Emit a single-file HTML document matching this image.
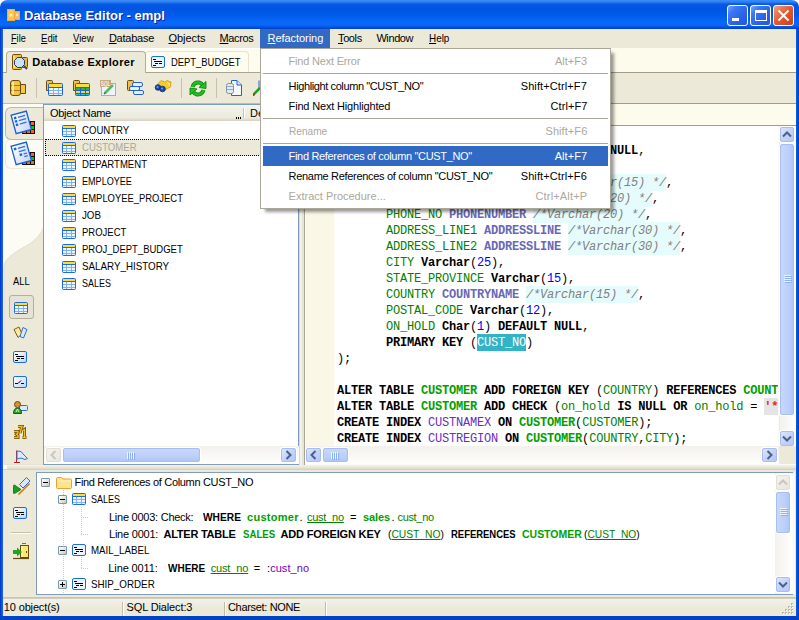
<!DOCTYPE html>
<html><head><meta charset="utf-8">
<style>
*{box-sizing:border-box}
html,body{margin:0;padding:0;width:799px;height:620px;overflow:hidden;background:#ECE9D8}
body{position:relative;font-family:"Liberation Sans",sans-serif;font-size:11px;color:#000}
.a{position:absolute}
.t{position:absolute;white-space:pre;line-height:13px}
#title{left:0;top:0;width:799px;height:29px;border-radius:7px 7px 0 0;
 background:linear-gradient(#3C8EF8 0px,#2E7EF2 2px,#0A5AE2 4px,#0055E2 8px,#005AEA 15px,#0866F8 21px,#0A68FA 25px,#0050DA 27.5px,#0040C4 29px)}
#lb{left:0;top:29px;width:3px;height:591px;background:linear-gradient(90deg,#0036BC,#0A52E0 50%,#1E66F0)}
#rb{left:796px;top:29px;width:3px;height:591px;background:linear-gradient(90deg,#0A5BE0,#0040C0)}
#bb{left:0;top:616px;width:799px;height:4px;background:#0043C4}
.cb{position:absolute;top:5px;width:21px;height:21px;border:1px solid #fff;border-radius:3px}
.mi{position:absolute;top:32px;line-height:13px;letter-spacing:-0.2px}
.u{text-decoration:underline}
/* list */
.row{position:absolute;left:44px;width:255px;height:17px}
.row .ic{position:absolute;left:18px;top:3px}
.row .tx{position:absolute;left:37px;top:2px;line-height:13px;letter-spacing:-0.9px}
/* code */
.code{position:absolute;left:337px;font-family:"Liberation Mono",monospace;font-size:12px;letter-spacing:-0.2px;line-height:16px;white-space:pre;margin-top:1px}
.k{font-weight:bold;color:#000}
.g{color:#008000}
.gb{color:#00A000;font-weight:bold}
.d{color:#6868B8;font-weight:bold}
.c{color:#808080;font-style:italic;background:#E6FCFC;padding:2px 0 1px}
.n{color:#0000FF}
.p{color:#6A2CC0}
/* scrollbar parts */
.sbtn{position:absolute;border:1px solid #B4C8F6;border-radius:2px;background:linear-gradient(90deg,#C8D8FB,#B9CEFA)}
/* menu */
#dd{left:260px;top:48px;width:351px;height:161px;background:#fff;border:1px solid #ACA899;box-shadow:4px 4px 3px -1px rgba(0,0,0,0.4)}
.dm{position:absolute;left:27px;line-height:13px;letter-spacing:-0.3px}
.ds{position:absolute;right:21px;line-height:13px;letter-spacing:-0.3px}
.dis{color:#ACA899}
.sep{position:absolute;left:1px;width:346px;height:1px;background:#ACA899}
</style></head>
<body>
<!-- frame -->
<div class="a" style="left:0;top:0;width:799px;height:10px;background:#fff"></div>
<div id="title" class="a"></div>
<div id="lb" class="a"></div><div id="rb" class="a"></div><div id="bb" class="a"></div>
<!-- title icon -->
<div class="t" style="left:24px;top:8px;font-size:13px;line-height:16px;font-weight:bold;color:#fff;text-shadow:1px 1px 0 #0A1E9E">Database Editor - empl</div>
<div class="cb" style="left:727px;background:linear-gradient(135deg,#7AA8FC,#3C78F4 25%,#2C64EC 60%,#2456E0)"><div class="a" style="left:4px;top:12px;width:7px;height:3px;background:#fff"></div></div>
<div class="cb" style="left:750px;background:linear-gradient(135deg,#7AA8FC,#3C78F4 25%,#2C64EC 60%,#2456E0)"><div class="a" style="left:4px;top:4px;width:12px;height:11px;border:1px solid #fff;border-top-width:3px"></div></div>
<div class="cb" style="left:773px;background:linear-gradient(135deg,#F0A080,#E0592F 50%,#C8421A)"><svg class="a" style="left:0;top:0" width="19" height="19"><path d="M4.5 4.5L14.5 14.5M14.5 4.5L4.5 14.5" stroke="#fff" stroke-width="2"/></svg></div>

<!-- menu bar -->
<div class="a" style="left:3px;top:29px;width:793px;height:19px;background:#ECE9D8"></div>
<div class="a" style="left:260px;top:29px;width:70px;height:19px;background:#316AC5"></div>

<span class="t" style="left:11px;top:32px;transform:scaleX(0.8333);transform-origin:0px 0;"><span class="u">F</span>ile</span>
<span class="t" style="left:41px;top:32px;transform:scaleX(0.8684);transform-origin:0px 0;"><span class="u">E</span>dit</span>
<span class="t" style="left:73.1px;top:32px;transform:scaleX(0.8708);transform-origin:0px 0;"><span class="u">V</span>iew</span>
<span class="t" style="left:108.9px;top:32px;letter-spacing:-0.229px;"><span class="u">D</span>atabase</span>
<span class="t" style="left:168.5px;top:32px;letter-spacing:-0.033px;"><span class="u">O</span>bjects</span>
<span class="t" style="left:219.6px;top:32px;letter-spacing:-0.4px;"><span class="u">M</span>acros</span>
<span class="t" style="left:267.6px;top:32px;letter-spacing:-0.06px;color:#fff;"><span class="u">R</span>efactoring</span>
<span class="t" style="left:338px;top:32px;letter-spacing:-0.375px;"><span class="u">T</span>ools</span>
<span class="t" style="left:376.4px;top:32px;letter-spacing:-0.4px;">Window</span>
<span class="t" style="left:428.5px;top:32px;transform:scaleX(0.9);transform-origin:0px 0;"><span class="u">H</span>elp</span>
<!-- LEFT PANEL -->
<!-- tab row -->
<div class="a" style="left:3px;top:48px;width:296px;height:25px;background:#FDFCEF"></div>
<div class="a" style="left:3px;top:48px;width:296px;height:1px;background:#FFFFFF"></div>
<div class="a" style="left:3px;top:72px;width:296px;height:1px;background:#A8A48F"></div>
<div class="a" style="left:145px;top:51px;width:104px;height:21px;background:#FDFCEF;border:1px solid #E6E3D3;border-bottom:none;border-radius:4px 4px 0 0"></div>
<div class="a" style="left:6px;top:51px;width:140px;height:22px;background:#ECE9D8;border:1px solid #B0AC98;border-bottom:none;border-radius:4px 4px 0 0"></div>
<span class="t" style="left:32.2px;top:56px;letter-spacing:0.362px;font-weight:bold;">Database Explorer</span>
<span class="t" style="left:170.7px;top:56px;transform:scaleX(0.8556);transform-origin:0px 0;">DEPT_BUDGET</span>
<!-- toolbar -->
<div class="a" style="left:3px;top:73px;width:296px;height:30px;background:#ECE9D8"></div>
<div class="a" style="left:3px;top:103px;width:296px;height:1px;background:#A6BEDF"></div>
<!-- vertical tab strip -->
<div class="a" style="left:3px;top:104px;width:41px;height:361px;background:#FDFCF4"></div>
<svg class="a" style="left:3px;top:104px" width="41" height="361"><path d="M41 123C34 138 24 141 16 146C8 151 1 156 1 164L1 361L41 361Z" fill="#ECE9D8" stroke="#E2DFD0" stroke-width="1"/></svg>
<div class="a" style="left:5px;top:139px;width:39px;height:30px;background:#FDFCF4;border:1px solid #ECEADC;border-right:none;border-radius:6px 0 0 6px"></div>
<div class="a" style="left:5px;top:107px;width:39px;height:33px;background:#ECE9D8;border:1px solid #BEBAA6;border-right:none;border-radius:6px 0 0 6px"></div>
<span class="t" style="left:12.9px;top:275px;transform:scaleX(0.85);transform-origin:0px 0;">ALL</span>
<div class="a" style="left:9px;top:295px;width:25px;height:24px;border:1px solid #B4B09C;border-radius:3px;background:#E6E3D5"></div>
<!-- list view -->
<div class="a" style="left:43px;top:104px;width:256px;height:361px;border:1px solid #7F9DB9;background:#fff"></div>
<div class="a" style="left:44px;top:105px;width:254px;height:16px;background:linear-gradient(#F4F3EE,#EBEADB 80%,#D6D2C2)"></div>
<span class="t" style="left:50px;top:107px;letter-spacing:-0.3px;">Object Name</span>
<span class="t" style="left:250px;top:107px;letter-spacing:0px;">De</span>
<div class="a" style="left:236px;top:117px;width:1px;height:2px;background:#000;box-shadow:2px 0 0 #000,4px 0 0 #000"></div>
<div class="a" style="left:243px;top:108px;width:1px;height:10px;background:#C7C5B2;box-shadow:1px 0 0 #fff"></div>
<div class="a" style="left:45px;top:139px;width:254px;height:17px;background:#ECE9D8;outline:1px dotted #000;outline-offset:-1px"></div>
<div class="row" style="top:122px"><svg class="ic" width="14" height="12" viewBox="0 0 14 12"><rect x="0.5" y="0.5" width="13" height="11" rx="1" fill="#7EB2F2" stroke="#1E6CD8"/><rect x="1" y="1" width="12" height="2" fill="#F8DC40"/><path d="M1 3.5H13" stroke="#1E6CD8"/><rect x="1" y="4" width="3" height="2" fill="#EEF5FE"/><rect x="5" y="4" width="4" height="2" fill="#EEF5FE"/><rect x="10" y="4" width="3" height="2" fill="#EEF5FE"/><rect x="1" y="7" width="3" height="2" fill="#EEF5FE"/><rect x="5" y="7" width="4" height="2" fill="#EEF5FE"/><rect x="10" y="7" width="3" height="2" fill="#EEF5FE"/><rect x="1" y="10" width="3" height="1" fill="#EEF5FE"/><rect x="5" y="10" width="4" height="1" fill="#EEF5FE"/><rect x="10" y="10" width="3" height="1" fill="#EEF5FE"/></svg></div>
<div class="row" style="top:139px"><svg class="ic" width="14" height="12" viewBox="0 0 14 12"><rect x="0.5" y="0.5" width="13" height="11" rx="1" fill="#7EB2F2" stroke="#1E6CD8"/><rect x="1" y="1" width="12" height="2" fill="#F8DC40"/><path d="M1 3.5H13" stroke="#1E6CD8"/><rect x="1" y="4" width="3" height="2" fill="#EEF5FE"/><rect x="5" y="4" width="4" height="2" fill="#EEF5FE"/><rect x="10" y="4" width="3" height="2" fill="#EEF5FE"/><rect x="1" y="7" width="3" height="2" fill="#EEF5FE"/><rect x="5" y="7" width="4" height="2" fill="#EEF5FE"/><rect x="10" y="7" width="3" height="2" fill="#EEF5FE"/><rect x="1" y="10" width="3" height="1" fill="#EEF5FE"/><rect x="5" y="10" width="4" height="1" fill="#EEF5FE"/><rect x="10" y="10" width="3" height="1" fill="#EEF5FE"/></svg></div>
<div class="row" style="top:156px"><svg class="ic" width="14" height="12" viewBox="0 0 14 12"><rect x="0.5" y="0.5" width="13" height="11" rx="1" fill="#7EB2F2" stroke="#1E6CD8"/><rect x="1" y="1" width="12" height="2" fill="#F8DC40"/><path d="M1 3.5H13" stroke="#1E6CD8"/><rect x="1" y="4" width="3" height="2" fill="#EEF5FE"/><rect x="5" y="4" width="4" height="2" fill="#EEF5FE"/><rect x="10" y="4" width="3" height="2" fill="#EEF5FE"/><rect x="1" y="7" width="3" height="2" fill="#EEF5FE"/><rect x="5" y="7" width="4" height="2" fill="#EEF5FE"/><rect x="10" y="7" width="3" height="2" fill="#EEF5FE"/><rect x="1" y="10" width="3" height="1" fill="#EEF5FE"/><rect x="5" y="10" width="4" height="1" fill="#EEF5FE"/><rect x="10" y="10" width="3" height="1" fill="#EEF5FE"/></svg></div>
<div class="row" style="top:173px"><svg class="ic" width="14" height="12" viewBox="0 0 14 12"><rect x="0.5" y="0.5" width="13" height="11" rx="1" fill="#7EB2F2" stroke="#1E6CD8"/><rect x="1" y="1" width="12" height="2" fill="#F8DC40"/><path d="M1 3.5H13" stroke="#1E6CD8"/><rect x="1" y="4" width="3" height="2" fill="#EEF5FE"/><rect x="5" y="4" width="4" height="2" fill="#EEF5FE"/><rect x="10" y="4" width="3" height="2" fill="#EEF5FE"/><rect x="1" y="7" width="3" height="2" fill="#EEF5FE"/><rect x="5" y="7" width="4" height="2" fill="#EEF5FE"/><rect x="10" y="7" width="3" height="2" fill="#EEF5FE"/><rect x="1" y="10" width="3" height="1" fill="#EEF5FE"/><rect x="5" y="10" width="4" height="1" fill="#EEF5FE"/><rect x="10" y="10" width="3" height="1" fill="#EEF5FE"/></svg></div>
<div class="row" style="top:190px"><svg class="ic" width="14" height="12" viewBox="0 0 14 12"><rect x="0.5" y="0.5" width="13" height="11" rx="1" fill="#7EB2F2" stroke="#1E6CD8"/><rect x="1" y="1" width="12" height="2" fill="#F8DC40"/><path d="M1 3.5H13" stroke="#1E6CD8"/><rect x="1" y="4" width="3" height="2" fill="#EEF5FE"/><rect x="5" y="4" width="4" height="2" fill="#EEF5FE"/><rect x="10" y="4" width="3" height="2" fill="#EEF5FE"/><rect x="1" y="7" width="3" height="2" fill="#EEF5FE"/><rect x="5" y="7" width="4" height="2" fill="#EEF5FE"/><rect x="10" y="7" width="3" height="2" fill="#EEF5FE"/><rect x="1" y="10" width="3" height="1" fill="#EEF5FE"/><rect x="5" y="10" width="4" height="1" fill="#EEF5FE"/><rect x="10" y="10" width="3" height="1" fill="#EEF5FE"/></svg></div>
<div class="row" style="top:207px"><svg class="ic" width="14" height="12" viewBox="0 0 14 12"><rect x="0.5" y="0.5" width="13" height="11" rx="1" fill="#7EB2F2" stroke="#1E6CD8"/><rect x="1" y="1" width="12" height="2" fill="#F8DC40"/><path d="M1 3.5H13" stroke="#1E6CD8"/><rect x="1" y="4" width="3" height="2" fill="#EEF5FE"/><rect x="5" y="4" width="4" height="2" fill="#EEF5FE"/><rect x="10" y="4" width="3" height="2" fill="#EEF5FE"/><rect x="1" y="7" width="3" height="2" fill="#EEF5FE"/><rect x="5" y="7" width="4" height="2" fill="#EEF5FE"/><rect x="10" y="7" width="3" height="2" fill="#EEF5FE"/><rect x="1" y="10" width="3" height="1" fill="#EEF5FE"/><rect x="5" y="10" width="4" height="1" fill="#EEF5FE"/><rect x="10" y="10" width="3" height="1" fill="#EEF5FE"/></svg></div>
<div class="row" style="top:224px"><svg class="ic" width="14" height="12" viewBox="0 0 14 12"><rect x="0.5" y="0.5" width="13" height="11" rx="1" fill="#7EB2F2" stroke="#1E6CD8"/><rect x="1" y="1" width="12" height="2" fill="#F8DC40"/><path d="M1 3.5H13" stroke="#1E6CD8"/><rect x="1" y="4" width="3" height="2" fill="#EEF5FE"/><rect x="5" y="4" width="4" height="2" fill="#EEF5FE"/><rect x="10" y="4" width="3" height="2" fill="#EEF5FE"/><rect x="1" y="7" width="3" height="2" fill="#EEF5FE"/><rect x="5" y="7" width="4" height="2" fill="#EEF5FE"/><rect x="10" y="7" width="3" height="2" fill="#EEF5FE"/><rect x="1" y="10" width="3" height="1" fill="#EEF5FE"/><rect x="5" y="10" width="4" height="1" fill="#EEF5FE"/><rect x="10" y="10" width="3" height="1" fill="#EEF5FE"/></svg></div>
<div class="row" style="top:241px"><svg class="ic" width="14" height="12" viewBox="0 0 14 12"><rect x="0.5" y="0.5" width="13" height="11" rx="1" fill="#7EB2F2" stroke="#1E6CD8"/><rect x="1" y="1" width="12" height="2" fill="#F8DC40"/><path d="M1 3.5H13" stroke="#1E6CD8"/><rect x="1" y="4" width="3" height="2" fill="#EEF5FE"/><rect x="5" y="4" width="4" height="2" fill="#EEF5FE"/><rect x="10" y="4" width="3" height="2" fill="#EEF5FE"/><rect x="1" y="7" width="3" height="2" fill="#EEF5FE"/><rect x="5" y="7" width="4" height="2" fill="#EEF5FE"/><rect x="10" y="7" width="3" height="2" fill="#EEF5FE"/><rect x="1" y="10" width="3" height="1" fill="#EEF5FE"/><rect x="5" y="10" width="4" height="1" fill="#EEF5FE"/><rect x="10" y="10" width="3" height="1" fill="#EEF5FE"/></svg></div>
<div class="row" style="top:258px"><svg class="ic" width="14" height="12" viewBox="0 0 14 12"><rect x="0.5" y="0.5" width="13" height="11" rx="1" fill="#7EB2F2" stroke="#1E6CD8"/><rect x="1" y="1" width="12" height="2" fill="#F8DC40"/><path d="M1 3.5H13" stroke="#1E6CD8"/><rect x="1" y="4" width="3" height="2" fill="#EEF5FE"/><rect x="5" y="4" width="4" height="2" fill="#EEF5FE"/><rect x="10" y="4" width="3" height="2" fill="#EEF5FE"/><rect x="1" y="7" width="3" height="2" fill="#EEF5FE"/><rect x="5" y="7" width="4" height="2" fill="#EEF5FE"/><rect x="10" y="7" width="3" height="2" fill="#EEF5FE"/><rect x="1" y="10" width="3" height="1" fill="#EEF5FE"/><rect x="5" y="10" width="4" height="1" fill="#EEF5FE"/><rect x="10" y="10" width="3" height="1" fill="#EEF5FE"/></svg></div>
<div class="row" style="top:275px"><svg class="ic" width="14" height="12" viewBox="0 0 14 12"><rect x="0.5" y="0.5" width="13" height="11" rx="1" fill="#7EB2F2" stroke="#1E6CD8"/><rect x="1" y="1" width="12" height="2" fill="#F8DC40"/><path d="M1 3.5H13" stroke="#1E6CD8"/><rect x="1" y="4" width="3" height="2" fill="#EEF5FE"/><rect x="5" y="4" width="4" height="2" fill="#EEF5FE"/><rect x="10" y="4" width="3" height="2" fill="#EEF5FE"/><rect x="1" y="7" width="3" height="2" fill="#EEF5FE"/><rect x="5" y="7" width="4" height="2" fill="#EEF5FE"/><rect x="10" y="7" width="3" height="2" fill="#EEF5FE"/><rect x="1" y="10" width="3" height="1" fill="#EEF5FE"/><rect x="5" y="10" width="4" height="1" fill="#EEF5FE"/><rect x="10" y="10" width="3" height="1" fill="#EEF5FE"/></svg></div><span class="t" style="left:81.7px;top:124px;transform:scaleX(0.8722);transform-origin:0px 0;">COUNTRY</span>
<span class="t" style="left:81.7px;top:141px;transform:scaleX(0.8694);transform-origin:0px 0;color:#ACA899;">CUSTOMER</span>
<span class="t" style="left:81.7px;top:158px;transform:scaleX(0.8693);transform-origin:0px 0;">DEPARTMENT</span>
<span class="t" style="left:81.7px;top:175px;transform:scaleX(0.8246);transform-origin:0px 0;">EMPLOYEE</span>
<span class="t" style="left:81.7px;top:192px;transform:scaleX(0.8551);transform-origin:0px 0;">EMPLOYEE_PROJECT</span>
<span class="t" style="left:81.7px;top:209px;transform:scaleX(0.8857);transform-origin:0px 0;">JOB</span>
<span class="t" style="left:81.7px;top:226px;transform:scaleX(0.8627);transform-origin:0px 0;">PROJECT</span>
<span class="t" style="left:81.7px;top:243px;transform:scaleX(0.8624);transform-origin:0px 0;">PROJ_DEPT_BUDGET</span>
<span class="t" style="left:81.7px;top:260px;transform:scaleX(0.8908);transform-origin:0px 0;">SALARY_HISTORY</span>
<span class="t" style="left:81.7px;top:277px;transform:scaleX(0.8139);transform-origin:0px 0;">SALES</span>
<!-- left h-scroll -->
<div class="a" style="left:44px;top:446px;width:255px;height:18px;background:#FBFAF6"></div>

<!-- splitter -->
<div class="a" style="left:299px;top:48px;width:6px;height:417px;background:#ECE9D8"></div>
<div class="a" style="left:299px;top:104px;width:6px;height:361px;background:linear-gradient(90deg,#DCDAC8 0,#DCDAC8 1px,#F2F1EC 1px,#F2F1EC 3px,#E6E4D8 3px,#E6E4D8 5px,#A9A592 5px)"></div>

<!-- RIGHT PANEL -->
<div class="a" style="left:305px;top:48px;width:491px;height:25px;background:#FDFBEC"></div>
<div class="a" style="left:305px;top:72px;width:491px;height:1px;background:#A09C88"></div>
<div class="a" style="left:305px;top:73px;width:491px;height:30px;background:#ECE9D8"></div>
<div class="a" style="left:305px;top:103px;width:491px;height:1px;background:#A09C88"></div>
<div class="a" style="left:305px;top:104px;width:491px;height:21px;background:#FDFBEC"></div>
<div class="a" style="left:305px;top:125px;width:491px;height:1px;background:#A09C88"></div>
<!-- editor -->
<div class="a" style="left:305px;top:126px;width:491px;height:320px;background:#fff"></div>
<div class="a" style="left:305px;top:126px;width:30px;height:320px;background:#FAF7E6;border-left:1px solid #FFFDEA;border-right:1px solid #FDFDF6"></div>
<div class="a" style="left:305px;top:126px;width:473px;height:320px;overflow:hidden"><div class="code" style="left:32px;top:0px"><span class="k">CREATE TABLE</span> <span class="gb">CUSTOMER</span> (</div>
<div class="code" style="left:32px;top:16px">       <span class="g">CUST_NO</span> <span class="d">CUSTNO</span> <span class="c">/*Integer */</span> <span class="k">NOT NULL</span>,</div>
<div class="code" style="left:32px;top:32px">       <span class="g">CUSTOMER</span> <span class="k">Varchar</span>(<span class="n">25</span>) <span class="k">NOT NULL</span>,</div>
<div class="code" style="left:32px;top:48px">       <span class="g">CONTACT_FIRST</span> <span class="d">FIRSTNAME</span> <span class="c">/*Varchar(15) */</span>,</div>
<div class="code" style="left:32px;top:64px">       <span class="g">CONTACT_LAST</span> <span class="d">LASTNAME</span> <span class="c">/*Varchar(20) */</span>,</div>
<div class="code" style="left:32px;top:80px">       <span class="g">PHONE_NO</span> <span class="d">PHONENUMBER</span> <span class="c">/*Varchar(20) */</span>,</div>
<div class="code" style="left:32px;top:96px">       <span class="g">ADDRESS_LINE1</span> <span class="d">ADDRESSLINE</span> <span class="c">/*Varchar(30) */</span>,</div>
<div class="code" style="left:32px;top:112px">       <span class="g">ADDRESS_LINE2</span> <span class="d">ADDRESSLINE</span> <span class="c">/*Varchar(30) */</span>,</div>
<div class="code" style="left:32px;top:128px">       <span class="g">CITY</span> <span class="k">Varchar</span>(<span class="n">25</span>),</div>
<div class="code" style="left:32px;top:144px">       <span class="g">STATE_PROVINCE</span> <span class="k">Varchar</span>(<span class="n">15</span>),</div>
<div class="code" style="left:32px;top:160px">       <span class="g">COUNTRY</span> <span class="d">COUNTRYNAME</span> <span class="c">/*Varchar(15) */</span>,</div>
<div class="code" style="left:32px;top:176px">       <span class="g">POSTAL_CODE</span> <span class="k">Varchar</span>(<span class="n">12</span>),</div>
<div class="code" style="left:32px;top:192px">       <span class="g">ON_HOLD</span> <span class="k">Char</span>(<span class="n">1</span>) <span class="k">DEFAULT NULL</span>,</div>
<div class="code" style="left:32px;top:208px">       <span class="k">PRIMARY KEY</span> (<span style="background:#33B4C6;color:#fff;padding:2px 0 1px">CUST_NO</span>)</div>
<div class="code" style="left:32px;top:224px">);</div>
<div class="code" style="left:32px;top:240px"></div>
<div class="code" style="left:32px;top:256px"><span class="k">ALTER TABLE</span> <span class="gb">CUSTOMER</span> <span class="k">ADD FOREIGN KEY</span> (<span class="g">COUNTRY</span>) <span class="k">REFERENCES</span> <span class="gb">COUNTRY</span>(<span class="g">COUNTRY</span>)</div>
<div class="code" style="left:32px;top:272px"><span class="k">ALTER TABLE</span> <span class="gb">CUSTOMER</span> <span class="k">ADD CHECK</span> (<span class="g">on_hold</span> <span class="k">IS NULL OR</span> <span class="g">on_hold</span> = <span style="color:#E03000;background:#E4E4E4;font-weight:bold;padding:2px 0 1px">'*'</span>)</div>
<div class="code" style="left:32px;top:288px"><span class="k">CREATE INDEX</span> <span class="p">CUSTNAMEX</span> <span class="k">ON</span> <span class="gb">CUSTOMER</span>(<span class="g">CUSTOMER</span>);</div>
<div class="code" style="left:32px;top:304px"><span class="k">CREATE INDEX</span> <span class="p">CUSTREGION</span> <span class="k">ON</span> <span class="gb">CUSTOMER</span>(<span class="g">COUNTRY</span>,<span class="g">CITY</span>);</div></div>
<!-- v scroll -->
<div class="a" style="left:778px;top:126px;width:18px;height:320px;background:#FBFAF6"></div>
<!-- h scroll -->
<div class="a" style="left:305px;top:446px;width:491px;height:19px;background:#FBFAF6"></div>

<!-- bottom splitter -->
<div class="a" style="left:3px;top:465px;width:793px;height:7px;background:#ECE9D8"></div>
<div class="a" style="left:3px;top:465px;width:793px;height:5px;background:linear-gradient(#F4F3EC,#E6E3D4 60%,#D2CEBC)"></div>
<div class="a" style="left:3px;top:465px;width:4px;height:4px;background:#fff"></div>

<!-- BOTTOM PANEL -->
<div class="a" style="left:3px;top:472px;width:33px;height:125px;background:#ECE9D8"></div>
<div class="a" style="left:36px;top:472px;width:757px;height:123px;border:1px solid #7F9DB9;background:#fff"></div>
<div class="a" style="left:63px;top:490px;width:1px;height:104px;background:repeating-linear-gradient(#D0CCB8 0 1px,transparent 1px 2px)"></div>
<div class="a" style="left:81px;top:507px;width:1px;height:27px;background:repeating-linear-gradient(#D0CCB8 0 1px,transparent 1px 2px)"></div>
<div class="a" style="left:81px;top:517px;width:8px;height:1px;background:repeating-linear-gradient(90deg,#D0CCB8 0 1px,transparent 1px 2px)"></div>
<div class="a" style="left:81px;top:534px;width:8px;height:1px;background:repeating-linear-gradient(90deg,#D0CCB8 0 1px,transparent 1px 2px)"></div>
<div class="a" style="left:81px;top:557px;width:1px;height:11px;background:repeating-linear-gradient(#D0CCB8 0 1px,transparent 1px 2px)"></div>
<div class="a" style="left:81px;top:568px;width:8px;height:1px;background:repeating-linear-gradient(90deg,#D0CCB8 0 1px,transparent 1px 2px)"></div>
<div class="a" style="left:41px;top:478px;width:9px;height:9px;border:1px solid #7A98AF;border-radius:1px;background:linear-gradient(135deg,#fff,#E6E3D6 60%,#C8C3B0)"></div><div class="a" style="left:43px;top:482px;width:5px;height:1px;background:#000"></div>
<div class="a" style="left:58px;top:495px;width:9px;height:9px;border:1px solid #7A98AF;border-radius:1px;background:linear-gradient(135deg,#fff,#E6E3D6 60%,#C8C3B0)"></div><div class="a" style="left:60px;top:499px;width:5px;height:1px;background:#000"></div>
<div class="a" style="left:58px;top:546px;width:9px;height:9px;border:1px solid #7A98AF;border-radius:1px;background:linear-gradient(135deg,#fff,#E6E3D6 60%,#C8C3B0)"></div><div class="a" style="left:60px;top:550px;width:5px;height:1px;background:#000"></div>
<div class="a" style="left:58px;top:580px;width:9px;height:9px;border:1px solid #7A98AF;border-radius:1px;background:linear-gradient(135deg,#fff,#E6E3D6 60%,#C8C3B0)"></div><div class="a" style="left:60px;top:584px;width:5px;height:1px;background:#000"></div><div class="a" style="left:62px;top:582px;width:1px;height:5px;background:#000"></div>
<svg class="a" style="left:56px;top:476px" width="16" height="13" viewBox="0 0 16 13"><path d="M0.5 2.5Q0.5 1.5 1.5 1.5H5.5L7 3H14.5Q15.5 3 15.5 4V11.5Q15.5 12.5 14.5 12.5H1.5Q0.5 12.5 0.5 11.5Z" fill="#FCE48C" stroke="#F0A030"/><path d="M1 5H15" stroke="#FFF4C0"/></svg>
<svg class="a" style="left:72px;top:493px" width="14" height="12" viewBox="0 0 14 12"><rect x="0.5" y="0.5" width="13" height="11" rx="1" fill="#7EB2F2" stroke="#1E6CD8"/><rect x="1" y="1" width="12" height="2" fill="#F8DC40"/><path d="M1 3.5H13" stroke="#1E6CD8"/><rect x="1" y="4" width="3" height="2" fill="#EEF5FE"/><rect x="5" y="4" width="4" height="2" fill="#EEF5FE"/><rect x="10" y="4" width="3" height="2" fill="#EEF5FE"/><rect x="1" y="7" width="3" height="2" fill="#EEF5FE"/><rect x="5" y="7" width="4" height="2" fill="#EEF5FE"/><rect x="10" y="7" width="3" height="2" fill="#EEF5FE"/><rect x="1" y="10" width="3" height="1" fill="#EEF5FE"/><rect x="5" y="10" width="4" height="1" fill="#EEF5FE"/><rect x="10" y="10" width="3" height="1" fill="#EEF5FE"/></svg>
<svg class="a" style="left:72px;top:544px" width="14" height="12" viewBox="0 0 14 12"><rect x="0.5" y="0.5" width="13" height="11" rx="1.5" fill="#EEF4FD" stroke="#1E6CD8"/><path d="M2 3.5H5M3 5.5H11M4 7.5H7M8 7.5H11M2 9.5H5" stroke="#000"/></svg>
<svg class="a" style="left:72px;top:578px" width="14" height="12" viewBox="0 0 14 12"><rect x="0.5" y="0.5" width="13" height="11" rx="1.5" fill="#EEF4FD" stroke="#1E6CD8"/><path d="M2 3.5H5M3 5.5H11M4 7.5H7M8 7.5H11M2 9.5H5" stroke="#000"/></svg>
<span class="t" style="left:74.5px;top:476px;letter-spacing:-0.328px;">Find References of Column CUST_NO</span>
<span class="t" style="left:91.25px;top:493px;transform:scaleX(0.8194);transform-origin:0px 0;">SALES</span>
<span class="t" style="left:109px;top:511px;letter-spacing:-0.25px;">Line 0003: Check:</span>
<span class="t" style="left:203px;top:511px;transform:scaleX(0.9268);transform-origin:0px 0;font-weight:bold;">WHERE</span>
<span class="t" style="left:247px;top:511px;letter-spacing:0.286px;font-weight:bold;color:#00A000;">customer</span>
<span class="t" style="left:299.5px;top:511px;letter-spacing:0px;">.</span>
<span class="t" style="left:307px;top:511px;letter-spacing:-0.25px;color:#008000;text-decoration:underline;">cust_no</span>
<span class="t" style="left:350px;top:511px;letter-spacing:0px;">=</span>
<span class="t" style="left:363px;top:511px;letter-spacing:-0.125px;font-weight:bold;color:#00A000;">sales</span>
<span class="t" style="left:391.5px;top:511px;letter-spacing:0px;">.</span>
<span class="t" style="left:397.5px;top:511px;letter-spacing:-0.333px;color:#008000;">cust_no</span>
<span class="t" style="left:109px;top:528px;letter-spacing:-0.222px;">Line 0001:</span>
<span class="t" style="left:163.5px;top:528px;letter-spacing:-0.25px;font-weight:bold;">ALTER TABLE</span>
<span class="t" style="left:242.5px;top:528px;transform:scaleX(0.8784);transform-origin:0px 0;font-weight:bold;color:#00A000;">SALES</span>
<span class="t" style="left:280.5px;top:528px;letter-spacing:-0.161px;font-weight:bold;">ADD FOREIGN KEY</span>
<span class="t" style="left:387.5px;top:528px;transform:scaleX(0.9333);transform-origin:0px 0;">(<span style='color:#008000;text-decoration:underline'>CUST_NO</span>)</span>
<span class="t" style="left:450.5px;top:528px;transform:scaleX(0.86);transform-origin:0px 0;font-weight:bold;">REFERENCES</span>
<span class="t" style="left:522px;top:528px;transform:scaleX(0.9524);transform-origin:0px 0;font-weight:bold;color:#00A000;">CUSTOMER</span>
<span class="t" style="left:584px;top:528px;transform:scaleX(0.9283);transform-origin:0px 0;">(<span style='color:#008000;text-decoration:underline'>CUST_NO</span>)</span>
<span class="t" style="left:91.25px;top:544px;transform:scaleX(0.8826);transform-origin:0px 0;">MAIL_LABEL</span>
<span class="t" style="left:108.3px;top:562px;letter-spacing:-0.111px;">Line 0011:</span>
<span class="t" style="left:167.5px;top:562px;transform:scaleX(0.9073);transform-origin:0px 0;font-weight:bold;">WHERE</span>
<span class="t" style="left:210.7px;top:562px;letter-spacing:-0.15px;color:#008000;text-decoration:underline;">cust_no</span>
<span class="t" style="left:253.7px;top:562px;letter-spacing:0px;">=</span>
<span class="t" style="left:267px;top:562px;letter-spacing:0.057px;">:<span style='color:#7000C0'>cust_no</span></span>
<span class="t" style="left:91.25px;top:578px;transform:scaleX(0.8908);transform-origin:0px 0;">SHIP_ORDER</span>
<div class="a" style="left:776px;top:473px;width:19px;height:121px;background:#FBFAF6"></div>

<!-- status bar -->
<div class="a" style="left:3px;top:595px;width:793px;height:21px;background:#ECE9D8"></div>
<div class="a" style="left:3px;top:597px;width:793px;height:2px;background:linear-gradient(#C2BFAE,#D8D5C5)"></div><div class="a" style="left:3px;top:599px;width:793px;height:17px;background:linear-gradient(#F2F1EA,#ECE9D8 60%)"></div>
<span class="t" style="left:3.8px;top:601px;letter-spacing:-0.145px;">10 object(s)</span>
<span class="t" style="left:126.5px;top:601px;letter-spacing:-0.125px;">SQL Dialect:3</span>
<span class="t" style="left:228px;top:601px;letter-spacing:-0.333px;">Charset: NONE</span>
<div class="a" style="left:122px;top:602px;width:1px;height:14px;background:#C0BCA8;box-shadow:1px 0 0 #fff"></div>
<div class="a" style="left:224px;top:602px;width:1px;height:14px;background:#C0BCA8;box-shadow:1px 0 0 #fff"></div>
<div class="a" style="left:325px;top:602px;width:1px;height:14px;background:#C0BCA8;box-shadow:1px 0 0 #fff"></div>

<svg class="a" style="left:782px;top:603px" width="13" height="13"><rect x="9" y="0" width="2" height="2" fill="#B8B4A2"/><rect x="10" y="1" width="1" height="1" fill="#fff"/><rect x="6" y="3" width="2" height="2" fill="#B8B4A2"/><rect x="7" y="4" width="1" height="1" fill="#fff"/><rect x="9" y="3" width="2" height="2" fill="#B8B4A2"/><rect x="10" y="4" width="1" height="1" fill="#fff"/><rect x="3" y="6" width="2" height="2" fill="#B8B4A2"/><rect x="4" y="7" width="1" height="1" fill="#fff"/><rect x="6" y="6" width="2" height="2" fill="#B8B4A2"/><rect x="7" y="7" width="1" height="1" fill="#fff"/><rect x="9" y="6" width="2" height="2" fill="#B8B4A2"/><rect x="10" y="7" width="1" height="1" fill="#fff"/><rect x="0" y="9" width="2" height="2" fill="#B8B4A2"/><rect x="1" y="10" width="1" height="1" fill="#fff"/><rect x="3" y="9" width="2" height="2" fill="#B8B4A2"/><rect x="4" y="10" width="1" height="1" fill="#fff"/><rect x="6" y="9" width="2" height="2" fill="#B8B4A2"/><rect x="7" y="10" width="1" height="1" fill="#fff"/><rect x="9" y="9" width="2" height="2" fill="#B8B4A2"/><rect x="10" y="10" width="1" height="1" fill="#fff"/></svg>
<svg class="a" style="left:7px;top:9px" width="13" height="12" viewBox="0 0 13 12"><rect x="0" y="0" width="8" height="12" fill="#F8C850"/><rect x="0.5" y="0.5" width="7" height="11" fill="none" stroke="#F09830" stroke-dasharray="1 1"/><rect x="7" y="2" width="6" height="9" fill="#F7B860"/><rect x="7.5" y="2.5" width="5" height="8" fill="none" stroke="#F09030" stroke-dasharray="1 1"/><circle cx="4" cy="6" r="1.5" fill="#FFF0C0"/><circle cx="10" cy="6" r="1.2" fill="#FFE8C0"/></svg>
<svg class="a" style="left:12px;top:54px" width="16" height="16" viewBox="0 0 16 16"><rect x="0.5" y="0.5" width="9" height="15" rx="1" fill="#F6C420" stroke="#7A4A08"/><rect x="9.5" y="3.5" width="6" height="10" rx="1" fill="#F0B830" stroke="#7A4A08"/><path d="M2 2V14" stroke="#FFF0A0" stroke-width="1.2"/><path d="M12 12L15 15" stroke="#3A4A70" stroke-width="2"/><path d="M5.5 3.5H9.5L12.5 6.5V10.5L9.5 13.5H5.5L2.5 10.5V6.5Z" fill="#C8E2FC" stroke="#2A3A5A"/></svg>
<svg class="a" style="left:151px;top:56px" width="14" height="12" viewBox="0 0 14 12"><rect x="0.5" y="0.5" width="13" height="11" rx="1.5" fill="#EEF4FD" stroke="#1E6CD8"/><path d="M2 3.5H5M3 5.5H11M4 7.5H7M8 7.5H11M2 9.5H5" stroke="#000"/></svg>
<svg class="a" style="left:10px;top:80px" width="17" height="16" viewBox="0 0 17 16"><path d="M9 4.5H15.5V13.5H9Z" fill="#F6C83C" stroke="#6B4A10"/><rect x="0.5" y="0.5" width="10" height="15" rx="2.5" fill="#F4C440" stroke="#6B4A10"/><path d="M1 5.5H10M1 10.5H10" stroke="#B07A10"/><path d="M3 2V14" stroke="#FFF3B0" stroke-width="1.5"/></svg>
<div class="a" style="left:36px;top:78px;width:1px;height:20px;background:#C5C1AA"></div>
<div class="a" style="left:181px;top:78px;width:1px;height:20px;background:#C5C1AA"></div>
<div class="a" style="left:216px;top:78px;width:1px;height:20px;background:#C5C1AA"></div>
<svg class="a" style="left:46px;top:80px" width="17" height="16" viewBox="0 0 17 16"><path d="M0.5 1.5Q0.5 0.5 1.5 0.5H5.5Q6.5 0.5 6.5 1.5V10.5H0.5Z" fill="#F2C04A" stroke="#6B4A10"/><rect x="2.5" y="3.5" width="14" height="12" rx="1" fill="#7EB2F2" stroke="#1E64D2"/><rect x="3" y="4" width="13" height="3" fill="#F8DC40"/><path d="M3 7.5H16" stroke="#1E64D2"/><rect x="3" y="8" width="4" height="2" fill="#EEF5FE"/><rect x="8" y="8" width="4" height="2" fill="#EEF5FE"/><rect x="13" y="8" width="3" height="2" fill="#EEF5FE"/><rect x="3" y="11" width="4" height="2" fill="#EEF5FE"/><rect x="8" y="11" width="4" height="2" fill="#EEF5FE"/><rect x="13" y="11" width="3" height="2" fill="#EEF5FE"/><rect x="3" y="14" width="4" height="1" fill="#EEF5FE"/><rect x="8" y="14" width="4" height="1" fill="#EEF5FE"/><rect x="13" y="14" width="3" height="1" fill="#EEF5FE"/></svg>
<svg class="a" style="left:73px;top:80px" width="17" height="16" viewBox="0 0 17 16"><path d="M0.5 1.5Q0.5 0.5 1.5 0.5H5.5Q6.5 0.5 6.5 1.5V10.5H0.5Z" fill="#F2C04A" stroke="#6B4A10"/><rect x="2.5" y="3.5" width="14" height="12" rx="1" fill="#7EB2F2" stroke="#1E64D2"/><rect x="3" y="4" width="13" height="3" fill="#F8DC40"/><path d="M3 7.5H16" stroke="#1E64D2"/><rect x="3" y="8" width="13" height="2" fill="#30B030"/><rect x="3" y="11" width="13" height="2" fill="#F0D840"/><rect x="3" y="14" width="13" height="1" fill="#20C0F0"/><path d="M2.5 10.5H16M2.5 13.5H16M7.5 8V15M12.5 8V15" stroke="#1E64D2"/></svg>
<svg class="a" style="left:100px;top:80px" width="17" height="16" viewBox="0 0 17 16"><rect x="1.5" y="3.5" width="14" height="12" fill="#EEF4FF" stroke="#8AB0F0"/><rect x="0" y="0" width="11" height="7" fill="#C8A880"/><text x="0.8" y="6" font-size="6.5" textLength="9.5" lengthAdjust="spacingAndGlyphs" font-family="Liberation Sans" font-weight="bold" fill="#FFF4E0">SQL</text><path d="M5 13L13 5" stroke="#5CB85C" stroke-width="2.5"/><path d="M4 14L5.5 12.5" stroke="#2C6C2C" stroke-width="1.5"/></svg>
<svg class="a" style="left:127px;top:80px" width="17" height="16" viewBox="0 0 17 16"><rect x="0.5" y="0.5" width="6" height="10" rx="1" fill="#F2C04A" stroke="#6B4A10"/><rect x="5.5" y="2.5" width="10" height="4" rx="1.5" fill="#E8F0FC" stroke="#1E64D2"/><rect x="2.5" y="6.5" width="10" height="4" rx="1.5" fill="#E8F0FC" stroke="#1E64D2"/><rect x="6.5" y="10.5" width="10" height="4" rx="1.5" fill="#E8F0FC" stroke="#1E64D2"/></svg>
<svg class="a" style="left:154px;top:79px" width="18" height="14" viewBox="0 0 18 14"><path d="M3 6L7 1.5L11 3L13 1.5L17 3L16.5 8L10 11.5L5 9Z" fill="#F8CC28" stroke="#D09A10" stroke-width="0.8"/><path d="M13 3L16 4.5L15.5 8" fill="#FCE8A0"/><circle cx="4" cy="8.5" r="2.8" fill="#1848A8" stroke="#0C2C70" stroke-width="0.8"/><circle cx="8.5" cy="10" r="2.8" fill="#1848A8" stroke="#0C2C70" stroke-width="0.8"/><circle cx="3.5" cy="8" r="1" fill="#70A0F0"/><circle cx="8" cy="9.5" r="1" fill="#70A0F0"/></svg>
<svg class="a" style="left:189px;top:80px" width="18" height="17" viewBox="0 0 18 17"><path d="M3.5 7Q5 2 10 2.5Q12.5 3 13.5 5" fill="none" stroke="#0C8A0C" stroke-width="4"/><path d="M3.5 7Q5 2 10 2.5Q12.5 3 13.5 5" fill="none" stroke="#22C022" stroke-width="2.2"/><path d="M10 7.5L17 1.5V8.5Z" fill="#22C022" stroke="#0C8A0C" stroke-width="0.9"/><path d="M14.5 10Q13 15 8 14.5Q5.5 14 4.5 12" fill="none" stroke="#0C8A0C" stroke-width="4"/><path d="M14.5 10Q13 15 8 14.5Q5.5 14 4.5 12" fill="none" stroke="#22C022" stroke-width="2.2"/><path d="M8 9L1 15V8Z" fill="#22C022" stroke="#0C8A0C" stroke-width="0.9"/></svg>
<svg class="a" style="left:226px;top:80px" width="17" height="16" viewBox="0 0 17 16"><path d="M5.5 0.5H11L15.5 5V15.5H5.5Z" fill="#F4F8FF" stroke="#1E64D2"/><path d="M11 0.5V5H15.5" fill="#D8E6FC" stroke="#1E64D2"/><rect x="0.5" y="3.5" width="7" height="10" rx="2" fill="#E4E8F0" stroke="#8090A8"/><path d="M1 6.5H7M1 9.5H7" stroke="#A0A8B8"/></svg>
<svg class="a" style="left:253px;top:80px" width="7" height="16" viewBox="0 0 7 16"><path d="M6 0.5V8" stroke="#1E64D2"/><path d="M0 15L7 8" stroke="#1AA01A" stroke-width="2.5"/><path d="M0 15.5L1.5 14" stroke="#903010" stroke-width="1.5"/></svg>
<svg class="a" style="left:8px;top:108px" width="30" height="30" viewBox="0 0 30 30"><defs><linearGradient id="dg0" x1="0" y1="0" x2="1" y2="1"><stop offset="0" stop-color="#FFFFFF"/><stop offset="1" stop-color="#C4D4F6"/></linearGradient></defs><rect x="14" y="13" width="13" height="13" fill="#101010"/><path d="M23 14h3v3h-3zM23 22h3v3h-3zM15 22h3v3h-3zM19 22h3v3h-3zM15 14h3v3h-3zM19 14h3v3h-3zM15 18h3v3h-3zM19 18h3v3h-3z" fill="#F06A10"/><path d="M23 18h3v3h-3z" fill="#10C010"/><g transform="translate(3.1 7.3) rotate(-15.4)"><rect x="0" y="0" width="15.8" height="19" fill="url(#dg0)" stroke="#1A5FD8" stroke-width="1.3"/><path d="M2 2.5h2.4v2.4H2zM2 6h2.4v2.4H2zM2 9.5h2.4v2.4H2z" fill="#1A5FD8"/><path d="M6 3.7H13.5M6 7.2H13.5M6 10.7H13" stroke="#3070E0" stroke-width="1.3"/></g></svg>
<svg class="a" style="left:8px;top:139px" width="30" height="30" viewBox="0 0 30 30"><defs><linearGradient id="dg1" x1="0" y1="0" x2="1" y2="1"><stop offset="0" stop-color="#FFFFFF"/><stop offset="1" stop-color="#C4D4F6"/></linearGradient></defs><rect x="14" y="13" width="13" height="13" fill="#101010"/><path d="M23 14h3v3h-3zM23 22h3v3h-3zM15 22h3v3h-3zM19 22h3v3h-3zM15 14h3v3h-3zM19 14h3v3h-3zM15 18h3v3h-3zM19 18h3v3h-3z" fill="#F06A10"/><path d="M23 18h3v3h-3z" fill="#10C010"/><g transform="translate(3.1 7.3) rotate(-15.4)"><rect x="0" y="0" width="15.8" height="19" fill="url(#dg1)" stroke="#1A5FD8" stroke-width="1.3"/><path d="M2 2.5h2.4v2.4H2zM6 9.5h2.4v2.4H6z" fill="#1A5FD8"/><path d="M6 3.7H13.5M6 7.2H13M10 10.7H13.5M10 13.5H13.5" stroke="#3070E0" stroke-width="1.3"/></g></svg>
<svg class="a" style="left:14px;top:302px" width="14" height="12" viewBox="0 0 14 12"><rect x="0.5" y="0.5" width="13" height="11" rx="1" fill="#7EB2F2" stroke="#1E6CD8"/><rect x="1" y="1" width="12" height="2" fill="#F8DC40"/><path d="M1 3.5H13" stroke="#1E6CD8"/><rect x="1" y="4" width="3" height="2" fill="#EEF5FE"/><rect x="5" y="4" width="4" height="2" fill="#EEF5FE"/><rect x="10" y="4" width="3" height="2" fill="#EEF5FE"/><rect x="1" y="7" width="3" height="2" fill="#EEF5FE"/><rect x="5" y="7" width="4" height="2" fill="#EEF5FE"/><rect x="10" y="7" width="3" height="2" fill="#EEF5FE"/><rect x="1" y="10" width="3" height="1" fill="#EEF5FE"/><rect x="5" y="10" width="4" height="1" fill="#EEF5FE"/><rect x="10" y="10" width="3" height="1" fill="#EEF5FE"/></svg>
<svg class="a" style="left:13px;top:326px" width="15" height="13" viewBox="0 0 15 13"><path d="M1 3.5L6 1L9 8L5 11.5Z" fill="#F8E8A0" stroke="#8A5A10"/><path d="M7 10.5L10 1.5L14 3.5L10.5 12Z" fill="#DCEAFC" stroke="#2C70E0"/></svg>
<svg class="a" style="left:13px;top:351px" width="14" height="12" viewBox="0 0 14 12"><defs><linearGradient id="pg13351" x1="0" y1="0" x2="1" y2="1"><stop offset="0" stop-color="#fff"/><stop offset="1" stop-color="#BCD4F6"/></linearGradient></defs><rect x="0.5" y="0.5" width="13" height="11" rx="1.5" fill="url(#pg13351)" stroke="#1E6CD8"/><path d="M2 3.5H5M3 5.5H11M4 7.5H7M8 7.5H11M2 9.5H5" stroke="#000"/></svg>
<svg class="a" style="left:13px;top:376px" width="14" height="12" viewBox="0 0 14 12"><defs><linearGradient id="tg1" x1="0" y1="0" x2="1" y2="1"><stop offset="0" stop-color="#fff"/><stop offset="1" stop-color="#BCD4F6"/></linearGradient></defs><rect x="0.5" y="0.5" width="13" height="11" rx="1.5" fill="url(#tg1)" stroke="#1E6CD8"/><path d="M2 7.5H5L8 4.5M8 7.5H11" stroke="#000" fill="none"/></svg>
<svg class="a" style="left:12px;top:400px" width="16" height="14" viewBox="0 0 16 14"><rect x="7.5" y="5.5" width="8" height="5" rx="1" fill="#DCEAFC" stroke="#2C70E0"/><path d="M1.5 13.5Q1.5 8 5.5 8Q9.5 8 9.5 13.5Z" fill="#22A822" stroke="#106010"/><path d="M5.5 9L4 12M5.5 9L7 12" stroke="#fff" stroke-width="0.8"/><circle cx="5.5" cy="4.5" r="3" fill="#D89038" stroke="#7A4208"/></svg>
<svg class="a" style="left:12px;top:425px" width="16" height="14" viewBox="0 0 16 14"><path d="M2 6.5H6V8L4.5 9.2L6 10.5V12.5H2" fill="none" stroke="#6B4A08" stroke-width="3"/><path d="M2 6.5H6V8L4.5 9.2L6 10.5V12.5H2" fill="none" stroke="#F0C020" stroke-width="1.4"/><path d="M6 1.5H10L8 8" fill="none" stroke="#6B4A08" stroke-width="3"/><path d="M6 1.5H10L8 8" fill="none" stroke="#F0C020" stroke-width="1.4"/><path d="M11 5.5L12.5 4.5V12.5M10.5 12.5H14.5" fill="none" stroke="#6B4A08" stroke-width="3"/><path d="M11 5.5L12.5 4.5V12.5M10.5 12.5H14.5" fill="none" stroke="#F0C020" stroke-width="1.4"/></svg>
<svg class="a" style="left:12px;top:450px" width="17" height="14" viewBox="0 0 17 14"><path d="M4.5 0.5V12" stroke="#C02020"/><path d="M2 12.5H8" stroke="#C02020"/><path d="M5 1L9 1.5L12 5L15.5 8.5L13 9.5L9 8L5 9Z" fill="#DCEAFC" stroke="#2C70E0"/></svg>
<svg class="a" style="left:12px;top:477px" width="18" height="18" viewBox="0 0 18 18"><path d="M11 11L18 4L14.5 0.5L7.5 7.5Z" fill="#D8E8FC" stroke="#2A6EDC"/><path d="M6.5 17.5L17.5 6.5" stroke="#E07818" stroke-width="1.6"/><path d="M1.5 9.5Q1 8 2.5 8L9 12.5L2.5 16.5Q1 16.5 1.5 15Z" fill="#18A018" stroke="#0C6C0C" stroke-width="0.8"/></svg>
<svg class="a" style="left:13px;top:507px" width="14" height="12" viewBox="0 0 14 12"><defs><linearGradient id="pg13507" x1="0" y1="0" x2="1" y2="1"><stop offset="0" stop-color="#fff"/><stop offset="1" stop-color="#BCD4F6"/></linearGradient></defs><rect x="0.5" y="0.5" width="13" height="11" rx="1.5" fill="url(#pg13507)" stroke="#1E6CD8"/><path d="M2 3.5H5M3 5.5H11M4 7.5H7M8 7.5H11M2 9.5H5" stroke="#000"/></svg>
<div class="a" style="left:11px;top:532px;width:20px;height:1px;background:#C5C1AA"></div><div class="a" style="left:11px;top:533px;width:20px;height:1px;background:#fff"></div>
<svg class="a" style="left:12px;top:543px" width="18" height="17" viewBox="0 0 18 17"><rect x="8.5" y="2.5" width="8" height="12" fill="#FCE868" stroke="#6B4A10"/><path d="M10 3V14" stroke="#FFF8C0"/><rect x="14" y="8" width="1" height="2" fill="#6B4A10"/><path d="M10 0.5H14" stroke="#20A020"/><path d="M1 9H6" stroke="#18A818" stroke-width="4"/><path d="M5 4.5L10 9L5 13.5Z" fill="#18A818"/><path d="M1 15.5H17" stroke="#6B4A10" stroke-width="1.2"/></svg>
<div class="a" style="left:44px;top:446px;width:254px;height:18px;background:linear-gradient(#F3F1EC,#FEFEFB)"></div>
<div class="a" style="left:46px;top:448px;width:15px;height:14px;border:1px solid #E2DFD2;border-radius:2px;background:linear-gradient(135deg,#F4F3EE,#E8E6DC);box-shadow:0 0 0 1px #fff"></div><svg class="a" style="left:0;top:0" width="799" height="620"><path d="M55.5 451.0L51.5 455.0L55.5 459.0" fill="none" stroke="#C9C7BA" stroke-width="2"/></svg>
<div class="a" style="left:63px;top:448px;width:137px;height:14px;border:1px solid #A8BEEF;border-radius:2px;background:linear-gradient(180deg,#C8D7FB,#BBCEFA 70%,#B0C6F8);box-shadow:0 0 0 1px #fff"></div><div class="a" style="left:127px;top:452px;width:1px;height:7px;background:#EEF4FE;box-shadow:1px 1px 0 #8CB0F8"></div><div class="a" style="left:129px;top:452px;width:1px;height:7px;background:#EEF4FE;box-shadow:1px 1px 0 #8CB0F8"></div><div class="a" style="left:131px;top:452px;width:1px;height:7px;background:#EEF4FE;box-shadow:1px 1px 0 #8CB0F8"></div><div class="a" style="left:133px;top:452px;width:1px;height:7px;background:#EEF4FE;box-shadow:1px 1px 0 #8CB0F8"></div>
<div class="a" style="left:281px;top:448px;width:15px;height:14px;border:1px solid #A8BEEF;border-radius:2px;background:linear-gradient(135deg,#DCE6FD,#C3D4FB 50%,#B4C8F8);box-shadow:0 0 0 1px #fff"></div><svg class="a" style="left:0;top:0" width="799" height="620"><path d="M286.5 451.0L290.5 455.0L286.5 459.0" fill="none" stroke="#4D6185" stroke-width="2"/></svg>
<div class="a" style="left:779px;top:126px;width:17px;height:320px;background:linear-gradient(90deg,#F3F1EC,#FEFEFB);border-left:1px solid #EDEBE0"></div>
<div class="a" style="left:780px;top:127px;width:14px;height:15px;border:1px solid #A8BEEF;border-radius:2px;background:linear-gradient(135deg,#DCE6FD,#C3D4FB 50%,#B4C8F8);box-shadow:0 0 0 1px #fff"></div><svg class="a" style="left:0;top:0" width="799" height="620"><path d="M783.0 136.5L787.0 132.5L791.0 136.5" fill="none" stroke="#4D6185" stroke-width="2"/></svg>
<div class="a" style="left:780px;top:144px;width:14px;height:271px;border:1px solid #A8BEEF;border-radius:2px;background:linear-gradient(90deg,#C8D7FB,#BBCEFA 70%,#B0C6F8);box-shadow:0 0 0 1px #fff"></div><div class="a" style="left:784px;top:275px;width:7px;height:1px;background:#EEF4FE;box-shadow:1px 1px 0 #8CB0F8"></div><div class="a" style="left:784px;top:277px;width:7px;height:1px;background:#EEF4FE;box-shadow:1px 1px 0 #8CB0F8"></div><div class="a" style="left:784px;top:279px;width:7px;height:1px;background:#EEF4FE;box-shadow:1px 1px 0 #8CB0F8"></div><div class="a" style="left:784px;top:281px;width:7px;height:1px;background:#EEF4FE;box-shadow:1px 1px 0 #8CB0F8"></div>
<div class="a" style="left:780px;top:431px;width:14px;height:15px;border:1px solid #A8BEEF;border-radius:2px;background:linear-gradient(135deg,#DCE6FD,#C3D4FB 50%,#B4C8F8);box-shadow:0 0 0 1px #fff"></div><svg class="a" style="left:0;top:0" width="799" height="620"><path d="M783.0 436.5L787.0 440.5L791.0 436.5" fill="none" stroke="#4D6185" stroke-width="2"/></svg>
<div class="a" style="left:305px;top:446px;width:474px;height:18px;background:linear-gradient(#F3F1EC,#FEFEFB)"></div>
<div class="a" style="left:306px;top:448px;width:15px;height:14px;border:1px solid #A8BEEF;border-radius:2px;background:linear-gradient(135deg,#DCE6FD,#C3D4FB 50%,#B4C8F8);box-shadow:0 0 0 1px #fff"></div><svg class="a" style="left:0;top:0" width="799" height="620"><path d="M315.5 451.0L311.5 455.0L315.5 459.0" fill="none" stroke="#4D6185" stroke-width="2"/></svg>
<div class="a" style="left:323px;top:448px;width:25px;height:14px;border:1px solid #A8BEEF;border-radius:2px;background:linear-gradient(180deg,#C8D7FB,#BBCEFA 70%,#B0C6F8);box-shadow:0 0 0 1px #fff"></div><div class="a" style="left:331px;top:452px;width:1px;height:7px;background:#EEF4FE;box-shadow:1px 1px 0 #8CB0F8"></div><div class="a" style="left:333px;top:452px;width:1px;height:7px;background:#EEF4FE;box-shadow:1px 1px 0 #8CB0F8"></div><div class="a" style="left:335px;top:452px;width:1px;height:7px;background:#EEF4FE;box-shadow:1px 1px 0 #8CB0F8"></div><div class="a" style="left:337px;top:452px;width:1px;height:7px;background:#EEF4FE;box-shadow:1px 1px 0 #8CB0F8"></div>
<div class="a" style="left:762px;top:448px;width:15px;height:14px;border:1px solid #A8BEEF;border-radius:2px;background:linear-gradient(135deg,#DCE6FD,#C3D4FB 50%,#B4C8F8);box-shadow:0 0 0 1px #fff"></div><svg class="a" style="left:0;top:0" width="799" height="620"><path d="M767.5 451.0L771.5 455.0L767.5 459.0" fill="none" stroke="#4D6185" stroke-width="2"/></svg>
<div class="a" style="left:779px;top:446px;width:17px;height:18px;background:#ECE9D8"></div>
<div class="a" style="left:775px;top:473px;width:17px;height:121px;background:linear-gradient(90deg,#F3F1EC,#FEFEFB)"></div>
<div class="a" style="left:776px;top:475px;width:14px;height:15px;border:1px solid #E2DFD2;border-radius:2px;background:linear-gradient(135deg,#F4F3EE,#E8E6DC);box-shadow:0 0 0 1px #fff"></div><svg class="a" style="left:0;top:0" width="799" height="620"><path d="M779.0 484.5L783.0 480.5L787.0 484.5" fill="none" stroke="#C9C7BA" stroke-width="2"/></svg>
<div class="a" style="left:776px;top:492px;width:14px;height:41px;border:1px solid #A8BEEF;border-radius:2px;background:linear-gradient(90deg,#C8D7FB,#BBCEFA 70%,#B0C6F8);box-shadow:0 0 0 1px #fff"></div><div class="a" style="left:780px;top:508px;width:7px;height:1px;background:#EEF4FE;box-shadow:1px 1px 0 #8CB0F8"></div><div class="a" style="left:780px;top:510px;width:7px;height:1px;background:#EEF4FE;box-shadow:1px 1px 0 #8CB0F8"></div><div class="a" style="left:780px;top:512px;width:7px;height:1px;background:#EEF4FE;box-shadow:1px 1px 0 #8CB0F8"></div><div class="a" style="left:780px;top:514px;width:7px;height:1px;background:#EEF4FE;box-shadow:1px 1px 0 #8CB0F8"></div>
<div class="a" style="left:776px;top:577px;width:14px;height:15px;border:1px solid #A8BEEF;border-radius:2px;background:linear-gradient(135deg,#DCE6FD,#C3D4FB 50%,#B4C8F8);box-shadow:0 0 0 1px #fff"></div><svg class="a" style="left:0;top:0" width="799" height="620"><path d="M779.0 582.5L783.0 586.5L787.0 582.5" fill="none" stroke="#4D6185" stroke-width="2"/></svg>
<!-- DROPDOWN MENU -->
<div id="dd" class="a"></div>
<div class="a" style="left:263px;top:73px;width:345px;height:1px;background:#ACA899"></div>
<div class="a" style="left:263px;top:118px;width:345px;height:1px;background:#ACA899"></div>
<div class="a" style="left:263px;top:143px;width:345px;height:1px;background:#ACA899"></div>
<div class="a" style="left:263px;top:146px;width:345px;height:20px;background:#316AC5"></div>
<span class="t" style="left:288.6px;top:55px;letter-spacing:-0.2px;color:#ACA899;">Find Next Error</span>
<span class="t" style="left:554.9px;top:55px;letter-spacing:0.02px;color:#ACA899;">Alt+F3</span>
<span class="t" style="left:288.6px;top:80px;letter-spacing:-0.392px;">Highlight column &quot;CUST_NO&quot;</span>
<span class="t" style="left:520.7px;top:80px;letter-spacing:0.108px;">Shift+Ctrl+F7</span>
<span class="t" style="left:288.6px;top:100px;letter-spacing:-0.17px;">Find Next Highlighted</span>
<span class="t" style="left:550.6px;top:100px;letter-spacing:0.067px;">Ctrl+F7</span>
<span class="t" style="left:288.6px;top:125px;transform:scaleX(0.919);transform-origin:0px 0;color:#ACA899;">Rename</span>
<span class="t" style="left:545.5px;top:125px;letter-spacing:0.071px;color:#ACA899;">Shift+F6</span>
<span class="t" style="left:288.6px;top:150px;letter-spacing:-0.331px;color:#fff;">Find References of column &quot;CUST_NO&quot;</span>
<span class="t" style="left:554.7px;top:150px;letter-spacing:0.06px;color:#fff;">Alt+F7</span>
<span class="t" style="left:288.6px;top:170px;letter-spacing:-0.306px;">Rename References of column &quot;CUST_NO&quot;</span>
<span class="t" style="left:520.7px;top:170px;letter-spacing:0.108px;">Shift+Ctrl+F6</span>
<span class="t" style="left:288.6px;top:190px;letter-spacing:0.0px;color:#ACA899;">Extract Procedure...</span>
<span class="t" style="left:535.5px;top:190px;letter-spacing:0.167px;color:#ACA899;">Ctrl+Alt+P</span>
</body></html>
